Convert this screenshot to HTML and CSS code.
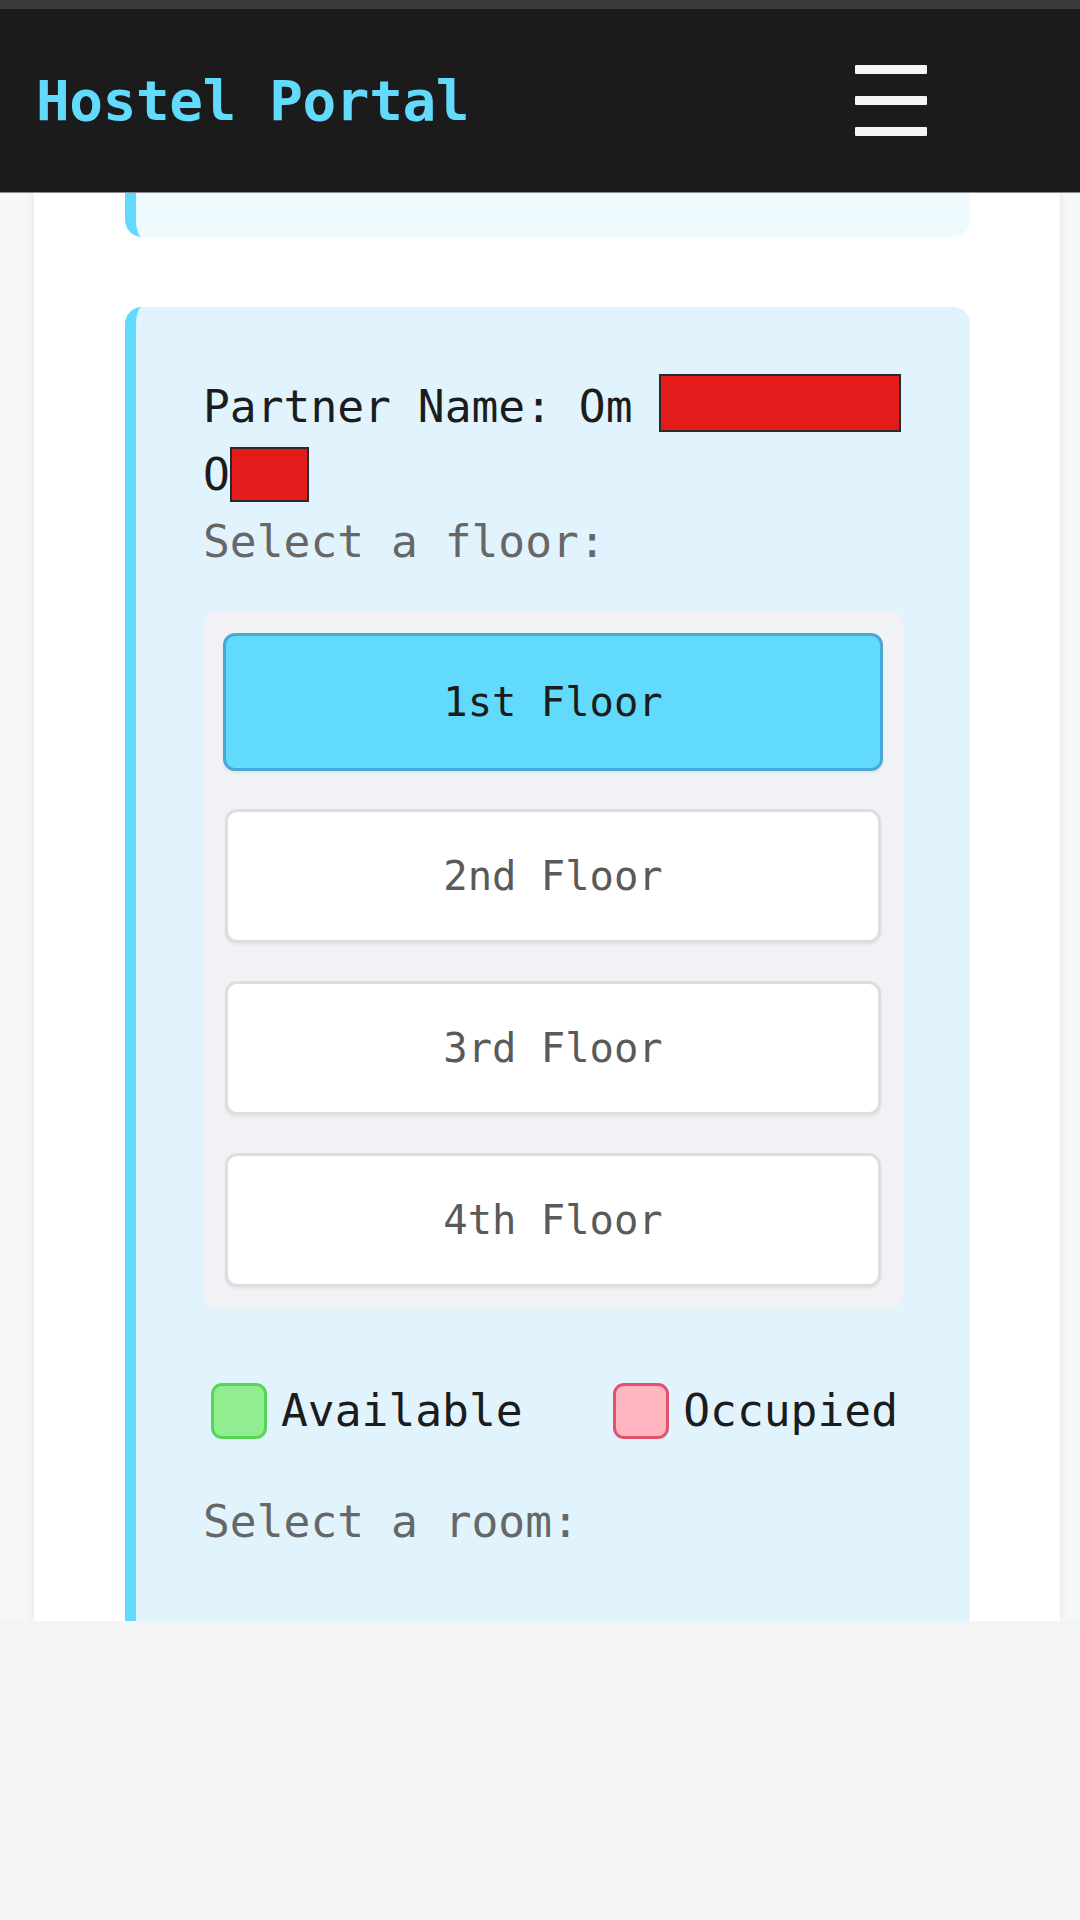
FILE: index.html
```html
<!DOCTYPE html>
<html lang="en">
<head>
<meta charset="utf-8">
<title>Hostel Portal</title>
<link rel="stylesheet" href="styles.css">
</head>
<body>
<div class="statusbar"></div>
<header class="topbar">
  <div class="brand">Hostel Portal</div>
  <button class="menu" aria-label="Menu">
    <span class="bar"></span>
    <span class="bar"></span>
    <span class="bar"></span>
  </button>
</header>
<div class="viewport">
  <main class="container">
    <div class="card card-prev"></div>
    <section class="card">
      <p class="partner"><span class="nw">Partner Name: Om <span class="redact r1"></span></span> <span class="nw">O<span class="redact r2"></span></span></p>
      <p class="label">Select a floor:</p>
      <div class="floors">
        <button class="floor active">1st Floor</button>
        <button class="floor">2nd Floor</button>
        <button class="floor">3rd Floor</button>
        <button class="floor">4th Floor</button>
      </div>
      <div class="legend">
        <div class="legend-item"><span class="swatch available"></span><span>Available</span></div>
        <div class="legend-item"><span class="swatch occupied"></span><span>Occupied</span></div>
      </div>
      <p class="label room-label">Select a room:</p>
    </section>
  </main>
</div>
</body>
</html>
```
FILE: styles.css
```css
* { box-sizing: border-box; }

html, body {
  margin: 0;
  padding: 0;
}

body {
  background: #f4f4f4;
  font-family: "DejaVu Sans Mono", "Liberation Mono", monospace;
  font-size: 44.6px;
  line-height: 67.5px;
  color: #1c1c1c;
  width: 1080px;
  height: 1920px;
  overflow: hidden;
}

.statusbar {
  height: 9px;
  background: #3a3a3a;
}

.topbar {
  height: 184px;
  background: #1b1b1b;
  border-bottom: 1px solid #8a8a8a;
  display: flex;
  align-items: center;
  justify-content: space-between;
  padding: 0 153px 0 36px;
}

.brand {
  color: #61dafb;
  font-weight: bold;
  font-size: 56px;
  line-height: 1;
  letter-spacing: -0.4px;
}

.menu {
  background: none;
  border: 0;
  padding: 0;
  width: 72px;
  display: flex;
  flex-direction: column;
  gap: 22px;
}

.bar {
  display: block;
  height: 9px;
  width: 72px;
  background: #f4f4f4;
  border-radius: 1px;
}

.viewport {
  height: 1428px;
  overflow: hidden;
  background: #f5f7f9;
  padding: 0 20px 0 34px;
}

.container {
  height: 100%;
  background: #ffffff;
  box-shadow: 0 0 8px rgba(0, 0, 0, 0.09);
  padding: 0 90px 0 91px;
}

.card {
  background: #e1f4fd;
  border-left: 11px solid #61dafb;
  border-radius: 17px;
  padding: 67px 67px 300px 67px;
}

.card-prev {
  height: 44px;
  padding: 0;
  background: #eefafe;
  border-radius: 0 0 17px 17px;
  margin-bottom: 70px;
}

.partner {
  margin: 0;
  color: #1c1c1c;
}

.nw { white-space: nowrap; }

.redact {
  display: inline-block;
  background: #e31b1b;
  border: 2px solid #2a2a2a;
  vertical-align: -10px;
}

.r1 { width: 242px; height: 58px; }
.r2 { width: 79px; height: 55px; vertical-align: -12px; }

.label {
  margin: 0;
  color: #676767;
}

.floors {
  margin-top: 34px;
  background: #f0f2f5;
  border-radius: 14px;
  padding: 22px;
  display: flex;
  flex-direction: column;
  gap: 38px;
}

.floor {
  height: 134px;
  border-radius: 12px;
  border: 3px solid #dedede;
  background: #ffffff;
  color: #5a5a5a;
  font-family: inherit;
  font-size: 40.5px;
  box-shadow: 0 2px 3px rgba(0, 0, 0, 0.06);
  padding: 0;
}

.floor.active {
  height: 138px;
  margin: 0 -2px;
  background: #61dafb;
  border-color: #48a9d6;
  color: #1c1c1c;
}

.legend {
  margin-top: 69px;
  display: flex;
  justify-content: space-between;
  padding: 0 5px 0 8px;
}

.legend-item {
  display: flex;
  align-items: center;
  gap: 14px;
}

.swatch {
  width: 56px;
  height: 56px;
  border-radius: 11px;
  border: 3px solid;
}

.swatch.available {
  background: #90ee90;
  border-color: #55d655;
}

.swatch.occupied {
  background: #ffb6c1;
  border-color: #e2526c;
}

.room-label {
  margin-top: 44px;
}
```
